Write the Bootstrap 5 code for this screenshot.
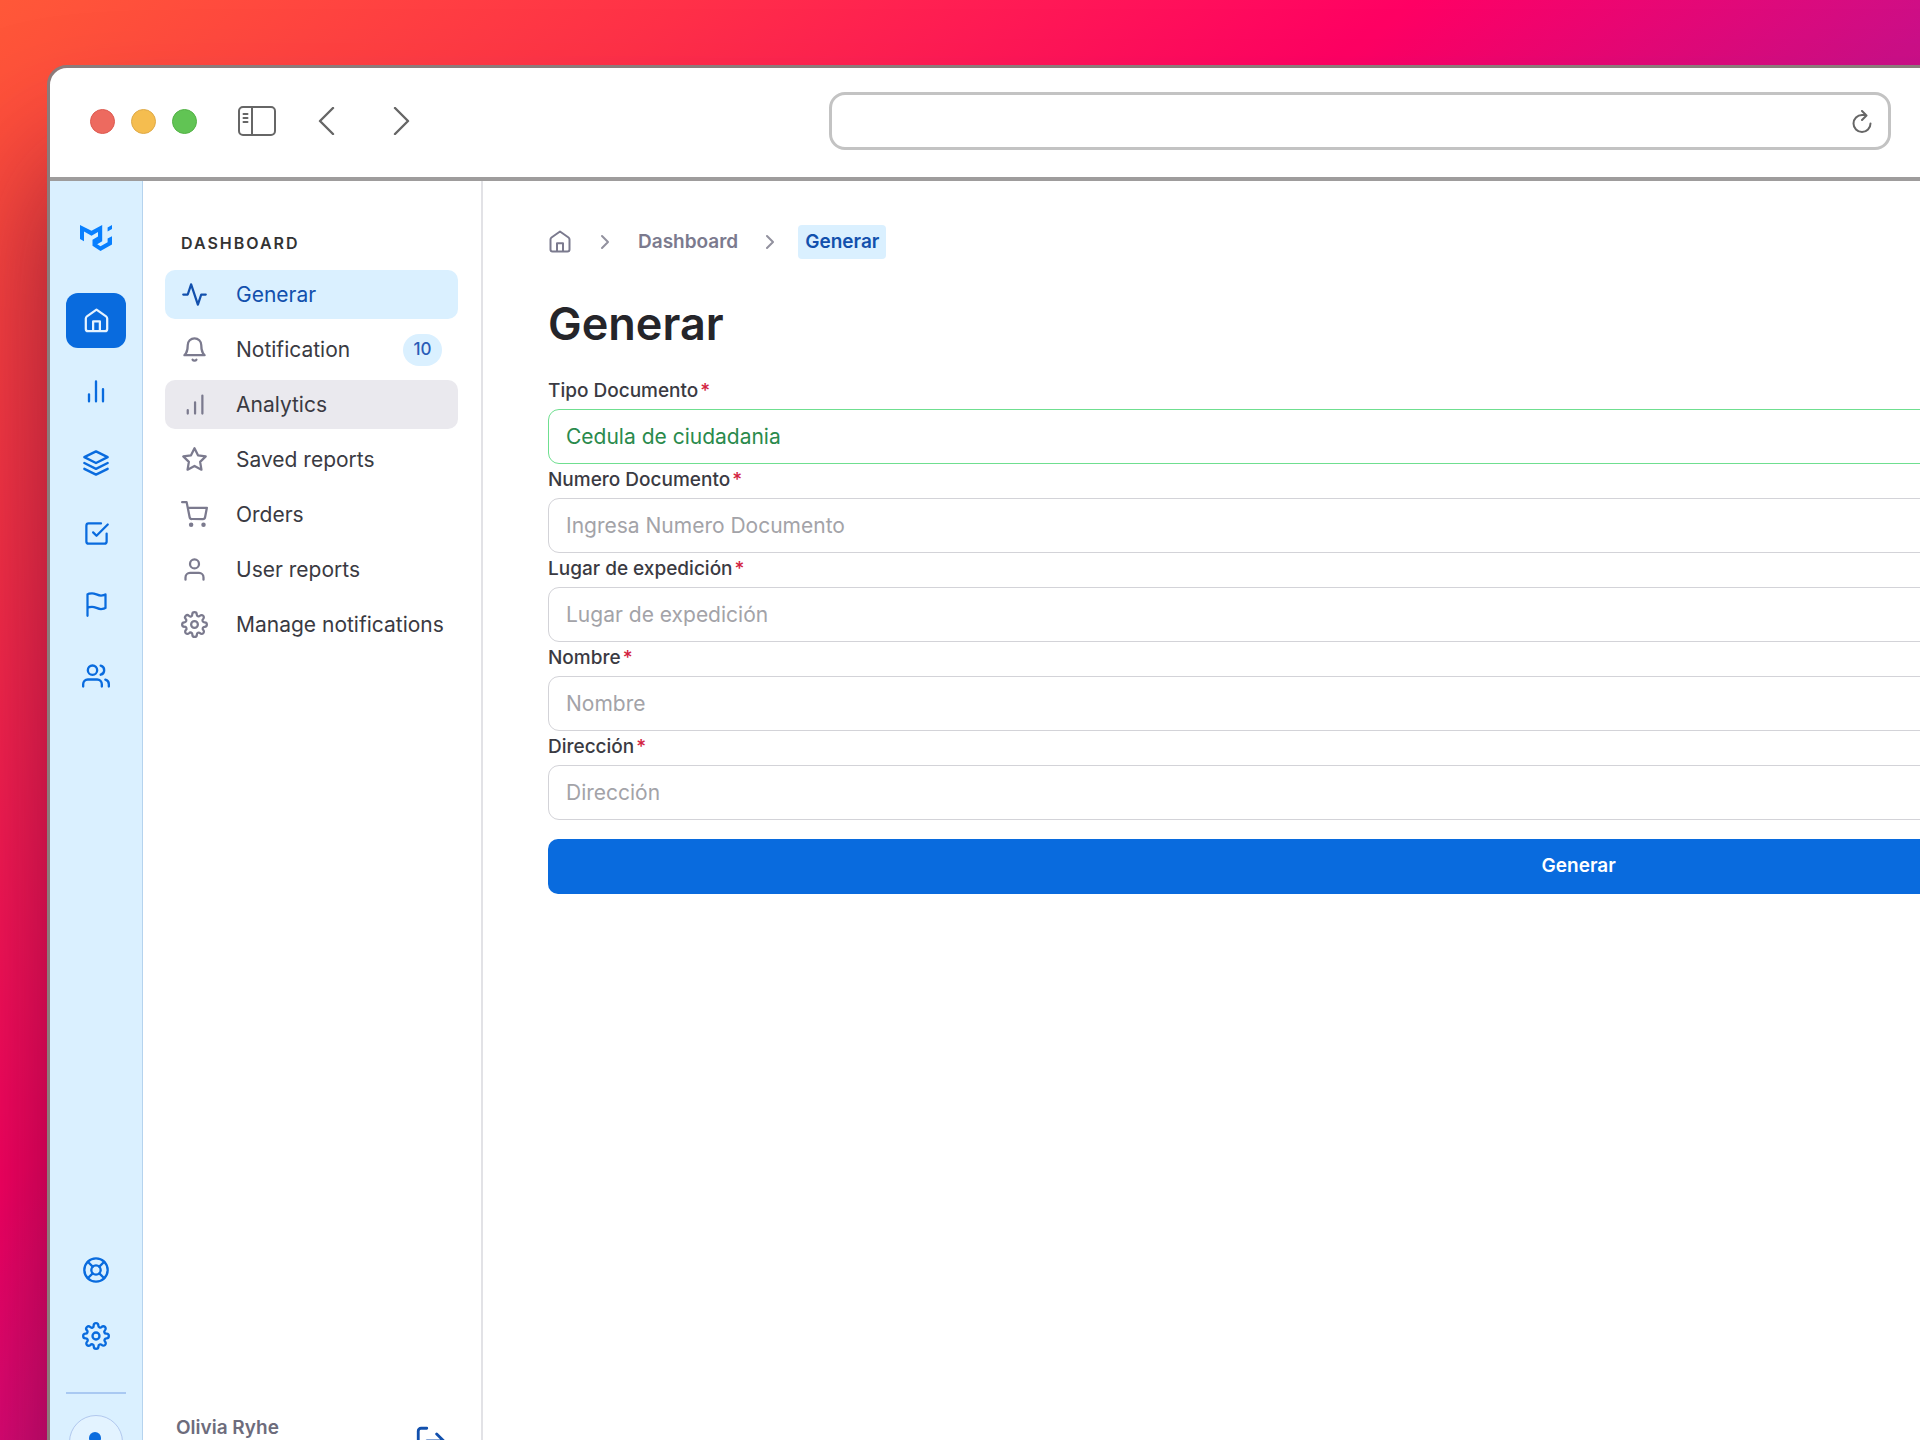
<!DOCTYPE html>
<html lang="es">
<head>
<meta charset="utf-8">
<meta name="viewport" content="width=device-width, initial-scale=1">
<title>Generar</title>
<link href="https://cdn.jsdelivr.net/npm/bootstrap@5.3.0/dist/css/bootstrap.min.css" rel="stylesheet">
<style>
:root{--soft:#daf0ff;--blue:#096bde;--deep:#1250ad;--muted:#7b7a8e}
html,body{height:100%}
body{font-family:Inter,"Liberation Sans",sans-serif;color:#3a3a42;overflow:hidden;
  background:linear-gradient(140deg,#ff5838 0%,#ff3048 19%,#ff0064 39%,#cc0f88 54%,#a01aa0 100%)}
svg{display:block;flex:none}
.ico{fill:none;stroke:currentColor;stroke-width:2;stroke-linecap:round;stroke-linejoin:round}
.browser{width:137vw;height:calc(100vh - 10px);margin:65px 0 0 47px;border:3px solid #8c7b7b;border-radius:20px;overflow:hidden;
  background:#fff;box-shadow:0 100px 130px rgba(70,10,40,.6)}
.chrome{height:113px;border-bottom:4px solid #9e9c9c;padding:0 0 3px 40px;color:#666}
.light{width:25px;height:25px;border-radius:50%;border:1px solid;padding:0;margin-right:16px}
.light.close-dot{background:#ed6a5f;border-color:#dd5a50}
.light.min-dot{background:#f5bd4f;border-color:#dfaa47}
.light.max-dot{background:#61c454;border-color:#52b245}
.chrome .bare{border:0;background:none;padding:0;color:inherit}
.tabs-btn{margin-left:37px}
.back-btn{margin-left:39px}
.fwd-btn{margin-left:58px}
.address{margin-left:419px;width:1062px;height:58px;border:3px solid #c3c3c3;border-radius:16px;padding:0 16px}
.address input{border:0;outline:0;background:none;color:inherit}
.rail{width:93px;background:var(--soft);border-right:1px solid #b5d3ee;color:var(--blue);padding:44px 15px 23px;gap:16px}
.rail a{color:inherit}
.rail .tile{width:60px;height:55px;border-radius:12px}
.rail .tile.on{background:var(--blue);color:#e6f3ff}
.rail-logo{margin-bottom:25px}
.rail-foot{gap:11px}
.rail-foot hr{border-top:2px solid #a9c9f2;opacity:1;width:60px;margin:18px 0 10px}
.avatar{width:54px;height:54px;border-radius:50%;border:1px solid #b1c8ee;background:#e3f3ff}
.side{width:340px;border-right:2px solid #e2e2e6;padding:50px 23px 34px 22px}
.side-title{font-size:16px;line-height:24px;font-weight:600;letter-spacing:2px;padding-left:16px;margin-bottom:15px;color:#333}
.side-nav{gap:6px}
.side-nav a{height:49px;border-radius:10px;padding:0 16px;font-size:21px;color:#3a3a42}
.side-nav a svg{color:var(--muted);margin-right:28px}
.side-nav a.on,.side-nav a.on svg{color:var(--deep)}
.side-nav a.on{background:var(--soft)}
.side-nav a.over{background:#eae9ee}
.count{background:var(--soft);color:#2a5cb8;border-radius:16px;width:39px;height:32px;font-size:17px;font-weight:500}
.side-user{padding:0 10px 0 11px}
.user-name{font-size:19px;line-height:24px;font-weight:600;color:#6d6c7c}
.work{padding:44px 65px 40px 65px}
.crumbs{font-size:19px;font-weight:600;color:var(--muted);height:34px}
.crumbs a{color:inherit}
.crumbs .sep{color:#92919e}
.crumbs .here{background:var(--soft);color:var(--deep);border-radius:4px;padding:0 7px;line-height:34px}
.work h1{font-size:45px;line-height:60px;font-weight:600;color:#25252a;margin:35px 0 21px}
.field label{font-size:19px;line-height:24px;font-weight:500;padding:4px 0 6px;display:block}
.field label span{color:#d3233f;margin-left:2px}
.field .form-control,.field .form-select{height:55px;border:1px solid #d3d3d8;border-radius:11px;font-size:21px;padding:0 17px}
.field .form-control::placeholder{color:#a3a3a8;opacity:1}
.field .form-select{border-color:#6fdf90;color:#2a8a4c}
.submit{height:55px;border-radius:10px;background:var(--blue);font-size:19px;font-weight:600;margin-top:19px}
</style>
</head>
<body>
<div class="browser d-flex flex-column">
  <header class="chrome d-flex align-items-center flex-shrink-0">
    <button class="light close-dot" aria-label="Cerrar"></button>
    <button class="light min-dot" aria-label="Minimizar"></button>
    <button class="light max-dot m-0" aria-label="Maximizar"></button>
    <button class="bare tabs-btn" aria-label="Barra lateral"><svg width="45" height="30" viewBox="0 0 45 30" fill="none" stroke="currentColor" stroke-width="2" stroke-linecap="round"><rect x="5" y="1" width="36" height="28" rx="4"/><path d="M18 1v28M9.500 8h4M9.500 12h4M9.500 16h4" /></svg></button>
    <button class="bare back-btn" aria-label="Atrás"><svg class="ico" width="17" height="28" viewBox="0 0 17 28"><path stroke-width="2.400" d="M15 1 2 14l13 13"/></svg></button>
    <button class="bare fwd-btn" aria-label="Adelante"><svg class="ico" width="17" height="28" viewBox="0 0 17 28"><path stroke-width="2.400" d="m2 1 13 13L2 27"/></svg></button>
    <div class="address d-flex align-items-center">
      <input class="flex-grow-1" type="text" aria-label="Dirección web">
      <button class="bare" aria-label="Recargar"><svg class="ico" width="20" height="23" viewBox="0 0 20 23"><path d="M18.500 13.500A8.500 8.500 0 1 1 10 5h4M10 1l4.500 4.500L10 10"/></svg></button>
    </div>
  </header>
  <div class="d-flex flex-grow-1">
    <nav class="rail d-flex flex-column align-items-center flex-shrink-0" aria-label="Principal">
      <a class="rail-logo" href="#" aria-label="Inicio"><svg width="32" height="27" viewBox="0 0 32 27" fill="#087fff"><path d="M0 0v14l4 2.300V6.500l7.500 4.200L18 7v4.500l-5.500 3.300v6L20.500 26 32 19.500v-8.300l-4.400 2.300v3.700l-7.100 4-3.300-1.900 5-3V0L11.500 5.800zM32 0l-4.400 2.500v4L32 4z"/></svg></a>
      <a class="tile on d-flex align-items-center justify-content-center" href="#" aria-label="Casa"><svg class="ico" width="27" height="27" viewBox="0 0 24 24"><path d="M9 21.500v-8.700h6v8.700M12 2.300 3.500 8.300a2.500 2.500 0 0 0-1 2v9.200a2 2 0 0 0 2 2h15a2 2 0 0 0 2-2v-9.200a2.500 2.500 0 0 0-1-2z"/></svg></a>
      <a class="tile d-flex align-items-center justify-content-center" href="#" aria-label="Gráficos"><svg class="ico" width="28" height="28" viewBox="0 0 24 24"><path d="M18 20V9.500M12 20V3M6 20v-6"/></svg></a>
      <a class="tile d-flex align-items-center justify-content-center" href="#" aria-label="Capas"><svg class="ico" width="28" height="28" viewBox="0 0 24 24"><path d="M12 2 2 7l10 5 10-5zM2 17l10 5 10-5M2 12l10 5 10-5"/></svg></a>
      <a class="tile d-flex align-items-center justify-content-center" href="#" aria-label="Tareas"><svg class="ico" width="27" height="27" viewBox="0 0 24 24"><path d="m9 11 3 3L22 4M21 12v7a2 2 0 0 1-2 2H5a2 2 0 0 1-2-2V5a2 2 0 0 1 2-2h11"/></svg></a>
      <a class="tile d-flex align-items-center justify-content-center" href="#" aria-label="Marcas"><svg class="ico" width="27" height="27" viewBox="0 0 24 24"><path d="M4 15s1-1 4-1 5 2 8 2 4-1 4-1V3s-1 1-4 1-5-2-8-2-4 1-4 1zM4 22v-7"/></svg></a>
      <a class="tile d-flex align-items-center justify-content-center" href="#" aria-label="Usuarios"><svg class="ico" width="28" height="28" viewBox="0 0 24 24"><path d="M17 21v-2a4 4 0 0 0-4-4H5a4 4 0 0 0-4 4v2M23 21v-2a4 4 0 0 0-3-3.870M16 3.130a4 4 0 0 1 0 7.750"/><circle cx="9" cy="7" r="4"/></svg></a>
      <div class="rail-foot d-flex flex-column align-items-center mt-auto">
        <a class="tile d-flex align-items-center justify-content-center" href="#" aria-label="Ayuda"><svg class="ico" width="28" height="28" viewBox="0 0 24 24"><circle cx="12" cy="12" r="10"/><circle cx="12" cy="12" r="4"/><path d="m4.930 4.930 4.240 4.240M14.830 14.830l4.240 4.240M14.830 9.170l4.240-4.240M4.930 19.070l4.240-4.240"/></svg></a>
        <a class="tile d-flex align-items-center justify-content-center" href="#" aria-label="Ajustes"><svg class="ico" width="28" height="28" viewBox="0 0 24 24"><use href="#gear"/></svg></a>
        <hr>
        <a class="avatar d-flex justify-content-center" href="#" aria-label="Perfil"><svg width="32" height="52" viewBox="0 0 32 52" fill="currentColor"><circle cx="15" cy="22" r="6"/><path d="M4 40c0-8 5-10 11-10s11 2 11 10z"/></svg></a>
      </div>
    </nav>
    <aside class="side d-flex flex-column flex-shrink-0">
      <div class="side-title text-uppercase">Dashboard</div>
      <nav class="side-nav d-flex flex-column" aria-label="Dashboard">
        <a class="on d-flex align-items-center text-decoration-none" href="#"><svg class="ico" width="27" height="27" viewBox="0 0 24 24"><path d="M22 12h-4l-3 9L9 3l-3 9H2"/></svg>Generar</a>
        <a class="d-flex align-items-center text-decoration-none" href="#"><svg class="ico" width="27" height="27" viewBox="0 0 24 24"><path d="M18 8A6 6 0 0 0 6 8c0 7-3 9-3 9h18s-3-2-3-9M13.730 21a2 2 0 0 1-3.460 0"/></svg>Notification<span class="count ms-auto d-flex align-items-center justify-content-center">10</span></a>
        <a class="over d-flex align-items-center text-decoration-none" href="#"><svg class="ico" width="27" height="27" viewBox="0 0 24 24"><path d="M12.500 20V10M19 20V4M6 20v-3"/></svg>Analytics</a>
        <a class="d-flex align-items-center text-decoration-none" href="#"><svg class="ico" width="27" height="27" viewBox="0 0 24 24"><path d="m12 2 3.090 6.260L22 9.270l-5 4.870 1.180 6.880L12 17.770l-6.180 3.250L7 14.140 2 9.270l6.910-1.010z"/></svg>Saved reports</a>
        <a class="d-flex align-items-center text-decoration-none" href="#"><svg class="ico" width="27" height="27" viewBox="0 0 24 24"><circle cx="9" cy="21" r="1"/><circle cx="20" cy="21" r="1"/><path d="M1 1h4l2.680 13.390a2 2 0 0 0 2 1.610h9.720a2 2 0 0 0 2-1.610L23 6H6"/></svg>Orders</a>
        <a class="d-flex align-items-center text-decoration-none" href="#"><svg class="ico" width="27" height="27" viewBox="0 0 24 24"><path d="M20 21v-2a4 4 0 0 0-4-4H8a4 4 0 0 0-4 4v2"/><circle cx="12" cy="7" r="4"/></svg>User reports</a>
        <a class="d-flex align-items-center text-decoration-none text-nowrap" href="#"><svg class="ico" width="27" height="27" viewBox="0 0 24 24"><g id="gear"><circle cx="12" cy="12" r="3"/><path d="M19.400 15a1.650 1.650 0 0 0 .33 1.820l.06.060a2 2 0 1 1-2.830 2.830l-.06-.06a1.650 1.650 0 0 0-2.800 1.170V21a2 2 0 0 1-4 0v-.09A1.650 1.650 0 0 0 7.180 19.730l-.06.060a2 2 0 1 1-2.830-2.830l.06-.06A1.650 1.650 0 0 0 3.090 14H3a2 2 0 0 1 0-4h.09A1.650 1.650 0 0 0 4.270 7.180l-.06-.06a2 2 0 1 1 2.830-2.830l.06.060A1.650 1.650 0 0 0 10 3.090V3a2 2 0 0 1 4 0v.09a1.650 1.650 0 0 0 2.820 1.180l.06-.06a2 2 0 1 1 2.830 2.830l-.06.060A1.650 1.650 0 0 0 20.910 10H21a2 2 0 0 1 0 4h-.09a1.650 1.650 0 0 0-1.510 1z"/></g></svg>Manage notifications</a>
      </nav>
      <div class="side-user mt-auto d-flex justify-content-between align-items-start">
        <span class="user-name">Olivia Ryhe</span>
        <button class="border-0 bg-transparent p-0 mt-2" aria-label="Salir"><svg class="ico" width="34" height="34" viewBox="0 0 24 24" color="#1250ad"><path d="M9 21H5a2 2 0 0 1-2-2V5a2 2 0 0 1 2-2h4M16 17l5-5-5-5M21 12H9"/></svg></button>
      </div>
    </aside>
    <main class="work flex-grow-1">
      <nav class="crumbs d-flex align-items-center" aria-label="Ruta">
        <a href="#" aria-label="Inicio"><svg class="ico" width="24" height="24" viewBox="0 0 24 24"><path d="M9 21.500v-8.300h6v8.300M12 1.500 3.500 7.500a2.500 2.500 0 0 0-1 2v10a2 2 0 0 0 2 2h15a2 2 0 0 0 2-2v-10a2.500 2.500 0 0 0-1-2z"/></svg></a>
        <svg class="ico sep mx-4" width="18" height="22" viewBox="0 0 18 22"><path d="m6 5 6 6-6 6"/></svg>
        <a class="text-decoration-none" href="#">Dashboard</a>
        <svg class="ico sep mx-4" width="12" height="22" viewBox="0 0 12 22"><path d="m5 5 6 6-6 6"/></svg>
        <span class="here" aria-current="page">Generar</span>
      </nav>
      <h1>Generar</h1>
      <form>
        <div class="field"><label for="tipo">Tipo Documento<span>*</span></label>
          <select class="form-select" id="tipo"><option>Cedula de ciudadania</option></select></div>
        <div class="field"><label for="numero">Numero Documento<span>*</span></label>
          <input class="form-control" id="numero" type="text" placeholder="Ingresa Numero Documento"></div>
        <div class="field"><label for="lugar">Lugar de expedición<span>*</span></label>
          <input class="form-control" id="lugar" type="text" placeholder="Lugar de expedición"></div>
        <div class="field"><label for="nombre">Nombre<span>*</span></label>
          <input class="form-control" id="nombre" type="text" placeholder="Nombre"></div>
        <div class="field"><label for="dir">Dirección<span>*</span></label>
          <input class="form-control" id="dir" type="text" placeholder="Dirección"></div>
        <button class="submit btn btn-primary border-0 w-100" type="button">Generar</button>
      </form>
    </main>
  </div>
</div>
<script src="https://cdn.jsdelivr.net/npm/bootstrap@5.3.0/dist/js/bootstrap.bundle.min.js"></script>
</body>
</html>
